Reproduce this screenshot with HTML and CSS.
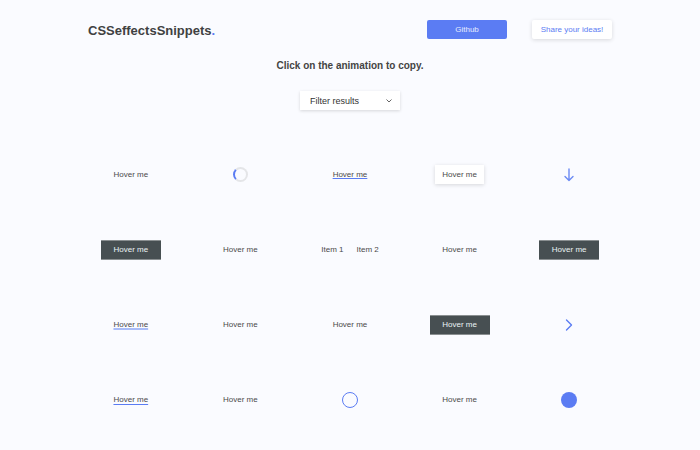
FILE: index.html
```html
<!DOCTYPE html>
<html lang="en">
<head>
<meta charset="utf-8">
<title>CSSeffectsSnippets</title>
<link rel="stylesheet" href="styles.css">
</head>
<body>
<header class="top">
  <div class="logo">CSSeffectsSnippets<span class="dot">.</span></div>
  <nav class="actions">
    <a class="btn btn-primary">Github</a>
    <a class="btn btn-light">Share your ideas!</a>
  </nav>
</header>
<h1 class="lead">Click on the animation to copy.</h1>
<div class="filter-wrap">
  <div class="filter">
    <span>Filter results</span>
    <svg class="chev" width="6" height="4" viewBox="0 0 6 4"><polyline points="0.5,0.5 3,3 5.5,0.5" fill="none" stroke="#555" stroke-width="0.9"/></svg>
  </div>
</div>
<main class="grid">
  <div class="cell"><span class="txt">Hover me</span></div>
  <div class="cell"><span class="spinner"></span></div>
  <div class="cell"><span class="txt ul-blue">Hover me</span></div>
  <div class="cell"><span class="card">Hover me</span></div>
  <div class="cell">
    <svg class="arrow" width="10" height="14" viewBox="0 0 10 14"><path d="M5 1 V12.5 M1 8.5 L5 12.5 L9 8.5" fill="none" stroke="#6b8af4" stroke-width="1.4" stroke-linecap="round" stroke-linejoin="round"/></svg>
  </div>

  <div class="cell"><span class="dark">Hover me</span></div>
  <div class="cell"><span class="txt">Hover me</span></div>
  <div class="cell"><span class="items"><span class="txt">Item 1</span><span class="txt">Item 2</span></span></div>
  <div class="cell"><span class="txt">Hover me</span></div>
  <div class="cell"><span class="dark">Hover me</span></div>

  <div class="cell"><span class="txt ul-light">Hover me</span></div>
  <div class="cell"><span class="txt">Hover me</span></div>
  <div class="cell"><span class="txt">Hover me</span></div>
  <div class="cell"><span class="dark">Hover me</span></div>
  <div class="cell">
    <svg class="arrow" width="8" height="12" viewBox="0 0 8 12"><polyline points="1.5,1 6.5,6 1.5,11" fill="none" stroke="#5b7cf3" stroke-width="1.4" stroke-linecap="round" stroke-linejoin="round"/></svg>
  </div>

  <div class="cell"><span class="txt ul-under">Hover me</span></div>
  <div class="cell"><span class="txt">Hover me</span></div>
  <div class="cell"><span class="ring"></span></div>
  <div class="cell"><span class="txt">Hover me</span></div>
  <div class="cell"><span class="ball"></span></div>
</main>
</body>
</html>
```
FILE: styles.css
```css
* { box-sizing: border-box; }
html, body { margin: 0; padding: 0; }
body {
  background: #fafbff;
  font-family: "Liberation Sans", Arial, sans-serif;
  color: #4a4a4a;
  width: 700px;
  height: 450px;
  overflow: hidden;
}
.top {
  width: 524px;
  margin: 0 auto;
  padding-top: 20px;
  display: flex;
  justify-content: space-between;
  align-items: center;
  height: 39px;
}
.logo {
  font-size: 13px;
  font-weight: bold;
  color: #3f4142;
  line-height: 19px;
  margin-top: 1px;
}
.dot { color: #5b7cf3; }
.actions { display: flex; gap: 25px; }
.btn {
  display: flex;
  align-items: center;
  justify-content: center;
  width: 80px;
  height: 19px;
  font-size: 8px;
  border-radius: 2px;
}
.btn-primary { background: #5b7cf3; color: #e6ecff; }
.btn-light {
  background: #fff;
  color: #5b7cf3;
  box-shadow: 0 1px 4px rgba(0,0,0,0.14);
}
.lead {
  margin: 20px 0 0;
  text-align: center;
  font-size: 10px;
  line-height: 14px;
  font-weight: bold;
  color: #444;
}
.filter-wrap { display: flex; justify-content: center; margin-top: 18px; }
.filter {
  width: 100px;
  height: 19px;
  background: #fff;
  box-shadow: 0 1px 3px rgba(0,0,0,0.15);
  display: flex;
  align-items: center;
  justify-content: space-between;
  padding: 0 8px 0 10px;
  font-size: 9px;
  color: #333;
}
.chev { display: block; }
.grid {
  width: 548px;
  margin: 27px auto 0;
  display: grid;
  grid-template-columns: repeat(5, 1fr);
  grid-auto-rows: 75px;
}
.cell { display: flex; align-items: center; justify-content: center; }
.txt { font-size: 8px; line-height: 10px; color: #4a4a4a; }
.ul-blue { text-decoration: underline; text-decoration-color: #5b7cf3; text-underline-offset: 1px; }
.ul-light { text-decoration: underline; text-decoration-color: #a9bcf8; text-decoration-thickness: 2px; text-underline-offset: 1px; }
.ul-under { text-decoration: underline; text-decoration-color: #5b7cf3; text-underline-offset: 2px; }
.spinner {
  width: 15px;
  height: 15px;
  border-radius: 50%;
  border: 2px solid #e4e5e8;
  border-left-color: #5b7cf3;
}
.card {
  display: flex;
  align-items: center;
  justify-content: center;
  width: 49px;
  height: 19px;
  background: #fff;
  font-size: 8px;
  color: #4a4a4a;
  box-shadow: 0 1px 4px rgba(0,0,0,0.15);
}
.dark {
  display: flex;
  align-items: center;
  justify-content: center;
  width: 60px;
  height: 20px;
  background: #474f52;
  border-top: 1px solid #8a8f91;
  border-bottom: 1px solid #8a8f91;
  font-size: 8px;
  color: #eaf3f5;
}
.items { display: flex; gap: 13px; }
.arrow { display: block; }
.ring {
  width: 16px;
  height: 16px;
  border-radius: 50%;
  border: 1.5px solid #5b7cf3;
}
.ball {
  width: 16px;
  height: 16px;
  border-radius: 50%;
  background: #5b7cf3;
}
```
